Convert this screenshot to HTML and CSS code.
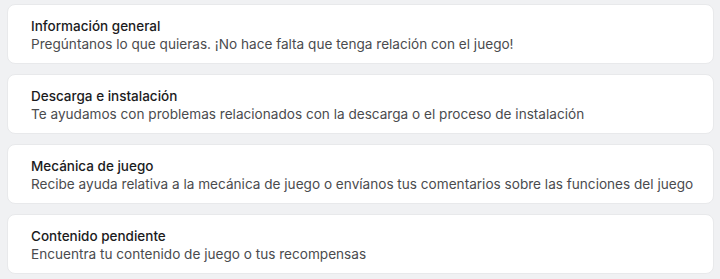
FILE: index.html
```html
<!DOCTYPE html>
<html lang="es">
<head>
<meta charset="utf-8">
<link rel="stylesheet" href="styles.css">
</head>
<body>
<div class="list">
  <div class="card">
    <div class="title">Información general</div>
    <div class="desc">Pregúntanos lo que quieras. ¡No hace falta que tenga relación con el juego!</div>
  </div>
  <div class="card">
    <div class="title">Descarga e instalación</div>
    <div class="desc">Te ayudamos con problemas relacionados con la descarga o el proceso de instalación</div>
  </div>
  <div class="card">
    <div class="title">Mecánica de juego</div>
    <div class="desc">Recibe ayuda relativa a la mecánica de juego o envíanos tus comentarios sobre las funciones del juego</div>
  </div>
  <div class="card">
    <div class="title">Contenido pendiente</div>
    <div class="desc">Encuentra tu contenido de juego o tus recompensas</div>
  </div>
</div>
</body>
</html>
```
FILE: styles.css
```css
html, body {
  margin: 0;
  background: #f0f1f3;
}
body {
  font-family: "Inter", "Noto Sans", sans-serif;
}
.list {
  display: flex;
  flex-direction: column;
  gap: 10.5px;
  padding: 4px 6px 0 7px;
}
.card {
  background: #ffffff;
  border: 1px solid #e8e9eb;
  border-radius: 8px;
  padding: 12px 4px 0 23px;
  display: flex;
  flex-direction: column;
  height: 59.5px;
  box-sizing: border-box;
}
.title {
  font-size: 13.5px;
  font-weight: 500;
  color: #1b1b1d;
  line-height: 18px;
  white-space: nowrap;
}
.desc {
  font-size: 13.6px;
  color: #4a4b4e;
  line-height: 18px;
  white-space: nowrap;
}
```
